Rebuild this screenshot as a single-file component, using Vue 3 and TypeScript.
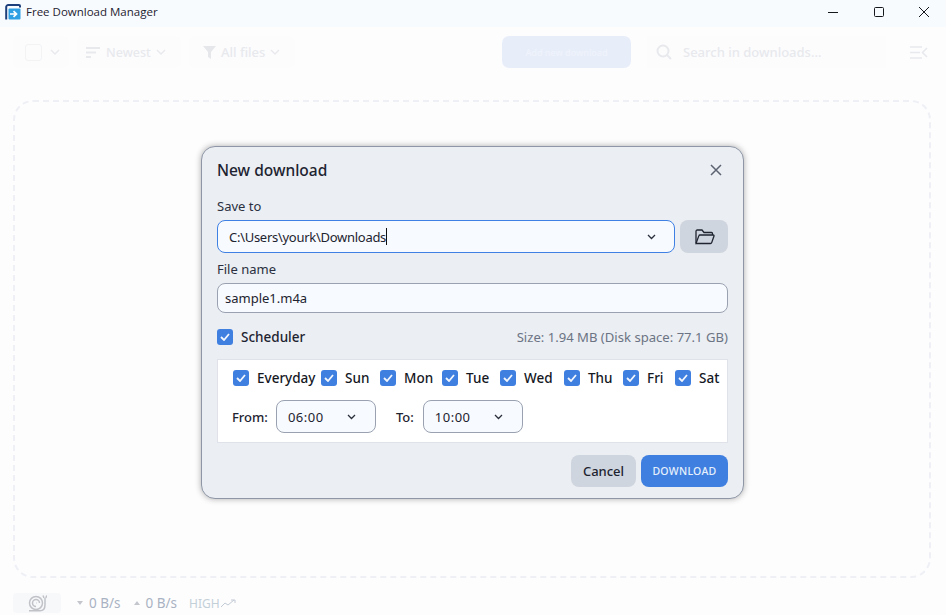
<script setup lang="ts">
const days = ['Everyday', 'Sun', 'Mon', 'Tue', 'Wed', 'Thu', 'Fri', 'Sat']
</script>

<template>
  <div class="window">
    <header class="titlebar">
      <svg class="logo" width="16" height="16" viewBox="0 0 16 16">
        <path d="M1.200 15.500V3a2 2 0 0 1 2-2h10.800a1 1 0 0 1 1 1v1.500" fill="none" stroke="#1c3f7c" stroke-width="2" />
        <rect x="3.500" y="4.500" width="12" height="11" rx="1" fill="#2f9fe4" />
        <path d="M5 10h6M8.500 7.200l3 2.800-3 2.800" fill="none" stroke="#fff" stroke-width="1.700" />
      </svg>
      <span class="app-name">Free Download Manager</span>
      <div class="win-controls">
        <svg width="12" height="12" viewBox="0 0 12 12"><path d="M1 6.500h10" stroke="#16161d" stroke-width="1" /></svg>
        <svg width="12" height="12" viewBox="0 0 12 12"><rect x="1.500" y="1.500" width="9" height="9" rx="1" fill="none" stroke="#16161d" stroke-width="1" /></svg>
        <svg width="12" height="12" viewBox="0 0 12 12"><path d="M1 1l10 10M11 1L1 11" stroke="#16161d" stroke-width="1" /></svg>
      </div>
    </header>

    <div class="toolbar">
      <div class="tool tool-check">
        <span class="fake-check"></span>
        <svg class="chev" width="10" height="6" viewBox="0 0 10 6"><path d="M1 1l4 4 4-4" /></svg>
      </div>
      <div class="tool tool-sort">
        <svg width="15" height="11" viewBox="0 0 15 11"><path d="M0 1h14M0 5.500h10M0 10h5" stroke="#e8e9ed" stroke-width="2" /></svg>
        <span>Newest</span>
        <svg class="chev" width="10" height="6" viewBox="0 0 10 6"><path d="M1 1l4 4 4-4" /></svg>
      </div>
      <div class="tool tool-filter">
        <svg width="13" height="13" viewBox="0 0 13 13"><path d="M0 0h13L8 6v7L5 11V6z" fill="#e6e7eb" /></svg>
        <span>All files</span>
        <svg class="chev" width="10" height="6" viewBox="0 0 10 6"><path d="M1 1l4 4 4-4" /></svg>
      </div>
      <div class="add-btn"><span>Add new download</span></div>
      <div class="search">
        <svg width="16" height="16" viewBox="0 0 16 16"><circle cx="7" cy="7" r="5.500" fill="none" stroke="#e8e9ed" stroke-width="2" /><path d="M11 11l4 4" stroke="#e8e9ed" stroke-width="2" /></svg>
        <span>Search in downloads...</span>
      </div>
      <svg class="side-icon" width="18" height="13" viewBox="0 0 18 13">
        <path d="M0 1h12M0 6.500h10M0 12h12M17 2l-4.500 4.500L17 11" fill="none" stroke="#e8e9ed" stroke-width="1.600" />
      </svg>
    </div>

    <main class="content">
      <div class="dropzone"></div>
    </main>

    <footer class="statusbar">
      <div class="snail">
        <svg width="19" height="17" viewBox="0 0 19 17" fill="none" stroke="#c0c2c8" stroke-width="1.500">
          <circle cx="8" cy="8" r="6.500" />
          <path d="M8 11.500a3.500 3.500 0 1 1 3.500-3.500M8 8h.5" />
          <path d="M1 15.700h11c3.500 0 5-3 5-6V3M15 .500l1 2.500M18.800 .500L17.800 3" />
        </svg>
      </div>
      <span class="speed"><i class="tri tri-down"></i>0 B/s</span>
      <span class="speed"><i class="tri tri-up"></i>0 B/s</span>
      <span class="high">HIGH</span>
      <svg width="15" height="9" viewBox="0 0 15 9"><path d="M0 8l4-4 3 2 6-5M10 1h4v3" fill="none" stroke="#c3cbd6" stroke-width="1" /></svg>
    </footer>

    <div class="overlay">
      <section class="dialog">
        <div class="dialog-head">
          <h2>New download</h2>
          <svg width="12" height="12" viewBox="0 0 12 12"><path d="M1 1l10 10M11 1L1 11" stroke="#5c6472" stroke-width="1.500" /></svg>
        </div>

        <label class="field-label">Save to</label>
        <div class="save-row">
          <div class="input input-focus">
            <span class="path">C:\Users\yourk\Downloads</span><span class="caret"></span>
            <svg class="select-chev" width="9" height="6" viewBox="0 0 9 6"><path d="M1 1l3.500 3.500L8 1" /></svg>
          </div>
          <button class="folder-btn">
            <svg width="21" height="16" viewBox="0 0 21 16" fill="none" stroke="#1f2430" stroke-width="1.300">
              <path d="M2 14V2.500C2 1.700 2.500 1 3.300 1H8l2 2.500h7.500c.6 0 1 .4 1 1V6" />
              <path d="M2 14.500h14.500c.6 0 1-.3 1.200-.9L20 7c.1-.6-.2-1-.8-1H6c-.6 0-1 .3-1.200.9L2 14.500z" />
            </svg>
          </button>
        </div>

        <label class="field-label name-label">File name</label>
        <div class="input">sample1.m4a</div>

        <div class="scheduler-row">
          <label class="check-item">
            <span class="check">
              <svg width="10" height="8" viewBox="0 0 10 8"><path d="M1 4l3 3 5-6" /></svg>
            </span>
            <span class="scheduler-text">Scheduler</span>
          </label>
          <span class="size">Size: 1.94 MB (Disk space: 77.1 GB)</span>
        </div>

        <div class="schedule-box">
          <div class="days">
            <label v-for="day in days" :key="day" class="check-item">
              <span class="check">
                <svg width="10" height="8" viewBox="0 0 10 8"><path d="M1 4l3 3 5-6" /></svg>
              </span>
              <span>{{ day }}</span>
            </label>
          </div>
          <div class="times">
            <span class="time-label">From:</span>
            <div class="time-select">
              06:00
              <svg width="9" height="6" viewBox="0 0 9 6"><path d="M1 1l3.500 3.500L8 1" /></svg>
            </div>
            <span class="time-label to-label">To:</span>
            <div class="time-select">
              10:00
              <svg width="9" height="6" viewBox="0 0 9 6"><path d="M1 1l3.500 3.500L8 1" /></svg>
            </div>
          </div>
        </div>

        <div class="actions">
          <button class="btn-cancel">Cancel</button>
          <button class="btn-download">DOWNLOAD</button>
        </div>
      </section>
    </div>
  </div>
</template>

<style>
html,
body {
  margin: 0;
  background: #fdfdfe;
}
</style>

<style scoped>
.window {
  position: relative;
  width: 946px;
  height: 615px;
  overflow: hidden;
  display: flex;
  flex-direction: column;
  background: #fdfdfe;
  font-family: "Noto Sans", "Liberation Sans", sans-serif;
  color: #1d2330;
}

.titlebar {
  height: 27px;
  box-sizing: border-box;
  flex: none;
  display: flex;
  align-items: center;
  padding: 0 0 4px 5px;
  background: #f8fbfe;
}

.logo {
  margin-right: 5px;
}

.app-name {
  font-family: "Open Sans", "Liberation Sans", sans-serif;
  font-size: 11.500px;
  color: #1e2230;
}

.win-controls {
  margin-left: auto;
  display: flex;
  gap: 33.500px;
  padding-right: 16px;
}

.toolbar {
  height: 32px;
  margin-top: 9px;
  padding-left: 13px;
  flex: none;
  display: flex;
  align-items: center;
  font-size: 13px;
  font-weight: 500;
  color: #e8e9ed;
}

.tool {
  height: 32px;
  box-sizing: border-box;
  display: flex;
  align-items: center;
  border-radius: 6px;
  background: #fcfcfd;
}

.tool-check {
  width: 56px;
  padding-left: 12px;
  gap: 8px;
  margin-right: 8px;
}

.fake-check {
  width: 15px;
  height: 15px;
  border: 1px solid #f2f3f5;
  border-radius: 3px;
}

.chev {
  fill: none;
  stroke: #e8e9ed;
  stroke-width: 1.300;
}

.tool-sort {
  width: 104px;
  padding-left: 9px;
  gap: 5px;
  margin-right: 8px;
  font-size: 12.500px;
}

.tool-filter {
  width: 106px;
  padding-left: 14px;
  gap: 5px;
}

.add-btn {
  width: 129px;
  height: 32px;
  margin-left: 207px;
  border-radius: 7px;
  background: #e8eef9;
  display: flex;
  align-items: center;
  justify-content: center;
  font-size: 9px;
  color: #eff3fb;
}

.search {
  width: 239px;
  height: 32px;
  margin-left: 16px;
  padding-left: 9px;
  box-sizing: border-box;
  background: #fcfcfd;
  display: flex;
  align-items: center;
  gap: 11px;
  border-radius: 4px;
}

.side-icon {
  margin-left: 24px;
}

.content {
  flex: 1;
  min-height: 0;
  padding: 32px 15px 0 13px;
}

.dropzone {
  height: 478px;
  box-sizing: border-box;
  border: 2px dashed #eff0f5;
  border-radius: 20px;
}

.statusbar {
  height: 37px;
  box-sizing: border-box;
  flex: none;
  padding: 15px 0 2px 13px;
  display: flex;
  align-items: center;
  font-size: 13.500px;
  color: #a9b2c2;
}

.snail {
  width: 48px;
  height: 20px;
  border-radius: 4px;
  background: #f7f8fa;
  display: flex;
  align-items: center;
  justify-content: center;
  margin-right: 16px;
}

.speed {
  display: flex;
  align-items: center;
  gap: 6px;
  margin-right: 13px;
}

.speed + .speed {
  margin-right: 12px;
}

.tri {
  width: 0;
  height: 0;
  border-left: 3px solid transparent;
  border-right: 3px solid transparent;
}

.tri-down {
  border-top: 4px solid #c3c6cc;
}

.tri-up {
  border-bottom: 4px solid #c3c6cc;
}

.high {
  color: #c3d0d8;
  font-size: 12px;
  margin-right: 1px;
}

/* modal sits on top of the whole page */
.overlay {
  position: absolute;
  inset: 27px 0 0 0;
  padding: 3px 1px 0 0;
  display: flex;
  align-items: center;
  justify-content: center;
}

.dialog {
  width: 543px;
  height: 353px;
  box-sizing: border-box;
  padding: 11px 15px 0 15px;
  background: #ebeef3;
  border: 1px solid #8f97a6;
  border-radius: 14px;
  box-shadow: 0 0 6px rgba(0, 0, 0, 0.32);
  font-size: 13px;
}

.dialog-head {
  height: 24px;
  display: flex;
  align-items: center;
  justify-content: space-between;
  padding-right: 6px;
}

h2 {
  margin: 0;
  font-size: 15.500px;
  font-weight: 500;
  color: #1d2330;
}

.field-label {
  display: block;
  margin-top: 15px;
  line-height: 18px;
  color: #2a3040;
}

.save-row {
  display: flex;
  gap: 5px;
  margin-top: 5px;
}

.input {
  position: relative;
  flex: 1;
  height: 30px;
  box-sizing: border-box;
  padding-left: 7px;
  display: flex;
  align-items: center;
  background: #f7fafe;
  border: 1px solid #9aa2b1;
  border-radius: 8px;
  color: #1d2330;
}

.input-focus {
  height: 33px;
  padding-left: 11px;
  border-color: #3f80e4;
}

.path {
  letter-spacing: -0.280px;
}

.caret {
  width: 1px;
  height: 17px;
  background: #111;
}

.select-chev {
  position: absolute;
  right: 18px;
  top: 13px;
}

svg path[d^="M1 1l3.500"] {
  fill: none;
  stroke: #2a2f3c;
  stroke-width: 1.300;
}

.folder-btn {
  width: 48px;
  height: 33px;
  border: none;
  padding: 0;
  border-radius: 8px;
  background: #cfd5de;
  display: flex;
  align-items: center;
  justify-content: center;
}

.name-label {
  margin-top: 7px;
  margin-bottom: 5px;
}

.scheduler-row {
  height: 20px;
  margin-top: 14px;
  display: flex;
  align-items: center;
  justify-content: space-between;
}

.scheduler-text {
  font-size: 13.500px;
  font-weight: 500;
}

.size {
  color: #6b7484;
  font-size: 13.100px;
}

.check-item {
  display: flex;
  align-items: center;
  gap: 8px;
}

.check {
  width: 16px;
  height: 16px;
  flex: none;
  border-radius: 3px;
  background: #3f7fe0;
  display: flex;
  align-items: center;
  justify-content: center;
}

.check path {
  fill: none;
  stroke: #f2f6fd;
  stroke-width: 1.800;
}

.schedule-box {
  height: 84px;
  margin-top: 12px;
  box-sizing: border-box;
  padding: 10px 0 0 15px;
  background: #fff;
  border: 1px solid #dfe2e8;
}

/* day columns are uneven in the app, Everyday sits tight against Sun */
.days {
  display: grid;
  grid-template-columns: 88px 59px 62px 58px 64px 59px 52px auto;
  line-height: 16px;
  font-size: 13.500px;
  font-weight: 500;
  color: #15181f;
}

.times {
  display: flex;
  align-items: center;
  margin-top: 14px;
  margin-left: -1px;
  font-weight: 500;
}

.time-label {
  margin-right: 8px;
}

.to-label {
  margin-left: 20px;
  margin-right: 9px;
}

.time-select {
  width: 100px;
  height: 33px;
  box-sizing: border-box;
  padding: 0 19px 0 11px;
  display: flex;
  align-items: center;
  justify-content: space-between;
  background: #f7fafe;
  border: 1px solid #9aa2b1;
  border-radius: 8px;
  font-weight: 400;
  letter-spacing: 0.500px;
}

.actions {
  display: flex;
  justify-content: flex-end;
  gap: 5px;
  margin-top: 12px;
}

.actions button {
  height: 32px;
  border: none;
  border-radius: 8px;
  font-family: inherit;
  padding: 0;
}

.btn-cancel {
  width: 65px;
  background: #cfd5de;
  font-size: 13px;
  font-weight: 500;
  color: #1d2330;
}

.btn-download {
  width: 87px;
  background: #3f7fe0;
  font-size: 10.500px;
  font-weight: 500;
  color: #e6f0fc;
  letter-spacing: 0.300px;
}
</style>
